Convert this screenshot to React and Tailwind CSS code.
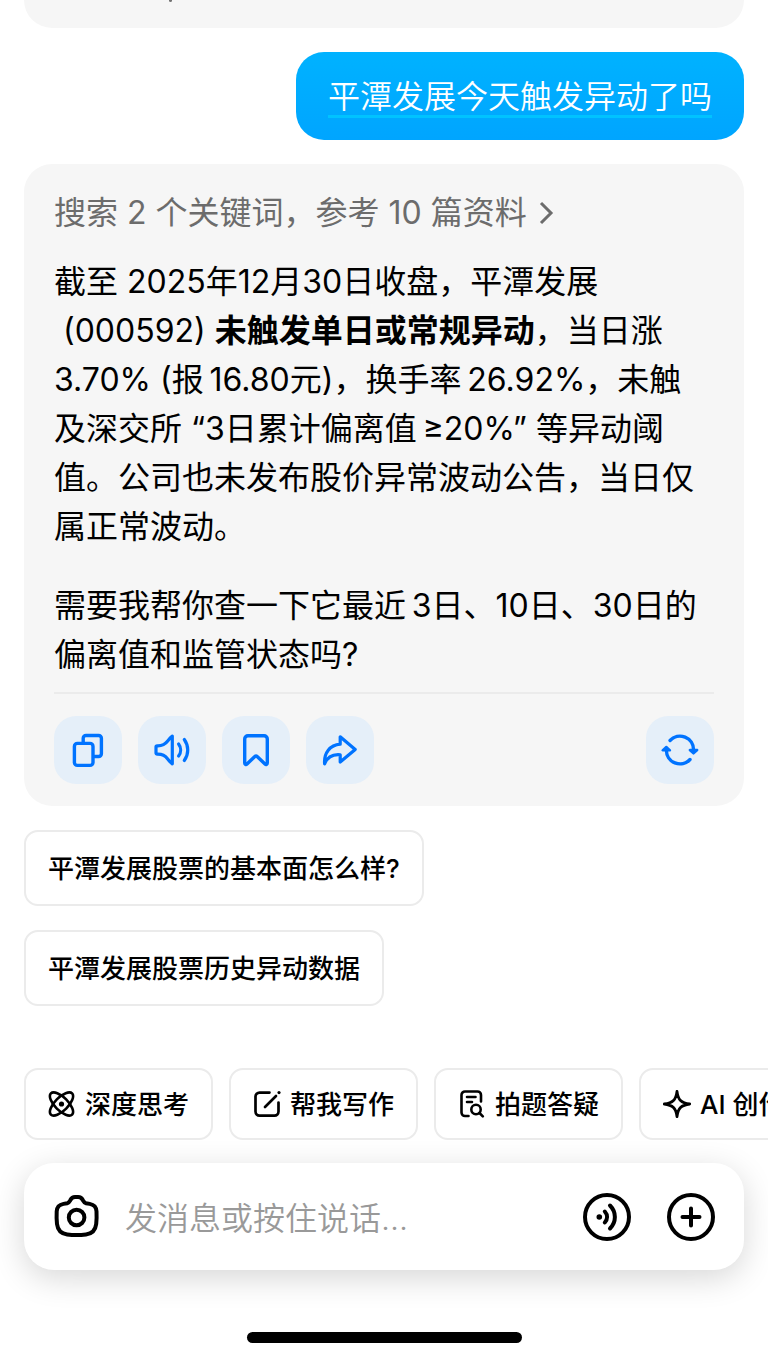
import React, { useState } from 'react';

const CopyIcon = () => (
    <svg viewBox="0 0 40 40" className="size-10" fill="none" stroke="currentColor" strokeWidth="3.4" strokeLinecap="round" strokeLinejoin="round">
        <rect x="6.4" y="13.4" width="18.6" height="22" rx="3" />
        <path d="M15.2 12.5V8.3a2.8 2.8 0 0 1 2.8-2.8h12.6a2.8 2.8 0 0 1 2.8 2.8v15.4a2.8 2.8 0 0 1-2.8 2.8h-4" />
    </svg>
);

const SpeakerIcon = () => (
    <svg viewBox="0 0 40 40" className="size-10" fill="none" stroke="currentColor" strokeWidth="3.2" strokeLinecap="round" strokeLinejoin="round">
        <path d="M5.2 15.8c4.500.2 8-1.500 10.500-4.800 1.500-2 2.900-3.700 4.600-4.800v27.600c-1.700-1.100-3.100-2.800-4.600-4.800-2.500-3.300-6-5-10.500-4.800-.7 0-1.200-.5-1.200-1.200v-6c0-.7.5-1.200 1.200-1.200Z" />
        <path d="M26.600 14c2.700 3.600 2.700 8.400 0 12M32.300 9.500c4.600 6.400 4.600 14.600 0 21" />
    </svg>
);

const BookmarkIcon = () => (
    <svg viewBox="0 0 40 40" className="size-10" fill="none" stroke="currentColor" strokeWidth="3.4" strokeLinecap="round" strokeLinejoin="round">
        <path d="M8.700 9a3.200 3.200 0 0 1 3.200-3.200h16.200a3.200 3.200 0 0 1 3.200 3.200v24c0 1.300-1.300 1.900-2.300 1l-7.600-7.300a2 2 0 0 0-2.800 0L11 34c-1 .9-2.300.3-2.300-1Z" />
    </svg>
);

const ShareIcon = () => (
    <svg viewBox="0 0 40 40" className="size-10" fill="none" stroke="currentColor" strokeWidth="3.2" strokeLinecap="round" strokeLinejoin="round">
        <path d="M20.200 6.800 35.200 19.400 20.200 32v-7.200c-7.500-.7-12.800 2.300-15.600 9-.8-10.700 5.300-18.800 15.600-19.600Z" />
    </svg>
);

const RefreshIcon = () => (
    <svg viewBox="0 0 40 40" className="size-10" fill="none" stroke="currentColor" strokeWidth="3.4" strokeLinecap="round" strokeLinejoin="round">
        <path d="M10 10.500a13.600 13.600 0 0 1 23.600 9.500" />
        <path d="M30 29.500a13.600 13.600 0 0 1-23.600-9.500" />
        <path d="M29.800 20h7.400l-3.700 3.400Z" fill="currentColor" strokeWidth="2.400" />
        <path d="M2.600 20.300h7.400l-3.700-3.400Z" fill="currentColor" strokeWidth="2.400" />
    </svg>
);

const AtomIcon = () => (
    <svg viewBox="0 0 28 28" className="size-7" fill="none" stroke="currentColor" strokeWidth="2.600">
        <ellipse cx="13.500" cy="14" rx="15" ry="6.600" transform="rotate(45 13.500 14)" />
        <ellipse cx="13.500" cy="14" rx="15" ry="6.600" transform="rotate(-45 13.500 14)" />
        <circle cx="13.500" cy="14" r="2.600" fill="currentColor" stroke="none" />
    </svg>
);

const WriteIcon = () => (
    <svg viewBox="0 0 28 28" className="size-7" fill="none" stroke="currentColor" strokeWidth="2.700" strokeLinecap="round" strokeLinejoin="round">
        <path d="M16.500 2.600H6.500a4 4 0 0 0-4 4v15a4 4 0 0 0 4 4h15a4 4 0 0 0 4-4v-9" />
        <path d="M12 17 23 6" />
        <circle cx="26" cy="2.600" r="1.600" fill="currentColor" stroke="none" />
    </svg>
);

const SolveIcon = () => (
    <svg viewBox="0 0 28 28" className="size-7" fill="none" stroke="currentColor" strokeWidth="2.600" strokeLinecap="round" strokeLinejoin="round">
        <path d="M10.500 26H7a3.500 3.500 0 0 1-3.500-3.500v-17.500a3.500 3.500 0 0 1 3.500-3.500h12.500a3.500 3.500 0 0 1 3.500 3.500v6.500" />
        <path d="M9 7h8.500M9 12h5" />
        <circle cx="18" cy="19.500" r="4.700" />
        <path d="m21.500 23 3.300 3.300" />
    </svg>
);

const SparkIcon = () => (
    <svg viewBox="0 0 28 28" className="size-7" fill="none" stroke="currentColor" strokeWidth="2.800" strokeLinejoin="round">
        <path d="M14 1.300c1 8.500 4.200 11.700 12.700 12.700-8.500 1-11.700 4.200-12.700 12.700-1-8.500-4.200-11.700-12.700-12.700 8.500-1 11.700-4.200 12.700-12.700Z" />
    </svg>
);

const CameraIcon = () => (
    <svg viewBox="0 0 48 48" className="size-12" fill="none" stroke="currentColor" strokeWidth="4" strokeLinejoin="round">
        <path d="M14.200 10.200c1.800-.4 2.300-1.600 3.200-3.200 1-1.900 2.400-2.900 4.600-2.900h3.200c2.200 0 3.600 1 4.600 2.900.9 1.600 1.400 2.800 3.200 3.200l3.700.7c4.300.8 6.600 3.200 6.800 7.500.2 4.200.2 8.300-.3 12.500-.8 6.600-3.800 9.700-10.200 10.500-6.200.8-12.700.8-18.800 0-6.400-.8-9.400-3.900-10.200-10.500-.5-4.200-.5-8.300-.3-12.500.2-4.300 2.500-6.700 6.800-7.500Z" />
        <circle cx="23.600" cy="24.500" r="7.800" />
    </svg>
);

const VoiceIcon = () => (
    <svg viewBox="0 0 48 48" className="size-12" fill="none" stroke="currentColor" strokeWidth="4" strokeLinecap="round">
        <circle cx="24" cy="24" r="22" />
        <circle cx="16.300" cy="24" r="2.800" fill="currentColor" stroke="none" />
        <path d="M21.800 18.500c3 3.400 3 7.600 0 11M27 12.500c6.500 6.500 6.500 16.500 0 23" />
    </svg>
);

const PlusIcon = () => (
    <svg viewBox="0 0 48 48" className="size-12" fill="none" stroke="currentColor" strokeWidth="4" strokeLinecap="round">
        <circle cx="24" cy="24" r="22" />
        <path d="M24 15.500v17M15.500 24h17" />
    </svg>
);

const actions = [
    { label: '复制', icon: CopyIcon },
    { label: '朗读', icon: SpeakerIcon },
    { label: '收藏', icon: BookmarkIcon },
    { label: '分享', icon: ShareIcon },
];

const suggestions = ['平潭发展股票的基本面怎么样?', '平潭发展股票历史异动数据'];

const tools = [
    { label: '深度思考', icon: AtomIcon },
    { label: '帮我写作', icon: WriteIcon },
    { label: '拍题答疑', icon: SolveIcon },
    { label: 'AI 创作', icon: SparkIcon },
];

function ActionButton({ label, icon: Icon }) {
    return (
        <button type="button" aria-label={label} className="flex size-[68px] items-center justify-center rounded-[22px] bg-[#e5eff9] text-[#0073ff]">
            <Icon />
        </button>
    );
}

export default function App() {
    const [message, setMessage] = useState('');

    return (
        <div className="overflow-hidden bg-white font-[Inter,'Noto_Sans_CJK_SC',sans-serif] text-[32px] text-black">
            <main className="flex flex-col px-6">
                {/* End of the previous answer */}
                <div className="h-7 rounded-b-[28px] bg-[#f6f6f6] pl-[145px]">
                    <div className="h-0.5 w-[3px] rounded-b-full bg-neutral-500" />
                </div>

                <div className="mt-6 flex h-[88px] items-end self-end rounded-[28px] bg-linear-to-b from-[#00b2ff] to-[#00a5ff] px-8 pb-[22px]">
                    <p className="border-b-3 border-[#00c3ff] leading-[37px] font-[350] text-white">平潭发展今天触发异动了吗</p>
                </div>

                <section className="mt-6 rounded-[28px] bg-[#f6f6f6] px-[30px] pt-[25px] pb-[22px]">
                    <button type="button" className="flex items-center gap-3 leading-[48px] text-[#6c6c6c]">
                        搜索 2 个关键词，参考 10 篇资料
                        <svg viewBox="0 0 16 24" className="h-6 w-4" fill="none" stroke="currentColor" strokeWidth="3">
                            <path d="m2 2 10 10L2 22" />
                        </svg>
                    </button>

                    <div className="mt-5 space-y-[30px] leading-[49px] whitespace-nowrap">
                        <p>
                            截至 2025年12月30日收盘，平潭发展<br />
                            &nbsp;(000592) <strong className="font-bold">未触发单日或常规异动</strong>，当日涨<br />
                            3.70% (报&thinsp;16.80元)，换手率&thinsp;26.92%，未触<br />
                            及深交所 “3日累计偏离值&thinsp;≥20%” 等异动阈<br />
                            值。公司也未发布股价异常波动公告，当日仅<br />
                            属正常波动。
                        </p>
                        <p>
                            需要我帮你查一下它最近&thinsp;3日、10日、30日的<br />
                            偏离值和监管状态吗?
                        </p>
                    </div>

                    <div className="mt-[13px] flex gap-4 border-t-2 border-[#ebebeb] pt-[22px]">
                        {actions.map((action) => (
                            <ActionButton key={action.label} {...action} />
                        ))}
                        <div className="ml-auto">
                            <ActionButton label="重新生成" icon={RefreshIcon} />
                        </div>
                    </div>
                </section>

                <div className="mt-6 flex flex-col items-start gap-6 text-[26px] font-medium">
                    {suggestions.map((text) => (
                        <button key={text} type="button" className="h-[76px] rounded-[14px] border-2 border-[#ebebeb] px-[22px]">
                            {text}
                        </button>
                    ))}
                </div>
            </main>

            <footer className="mt-[62px]">
                <div className="flex gap-4 overflow-hidden pl-6 text-[26px] font-medium">
                    {tools.map(({ label, icon: Icon }) => (
                        <button key={label} type="button" className="flex h-[72px] shrink-0 items-center gap-[9px] rounded-[14px] border-2 border-[#ebebeb] px-[22px] whitespace-nowrap">
                            <Icon />
                            {label}
                        </button>
                    ))}
                </div>

                <form
                    onSubmit={(e) => e.preventDefault()}
                    className="mx-6 mt-[23px] flex h-[107px] items-center rounded-[30px] bg-white px-[29px] shadow-[0_8px_32px_rgba(0,0,0,0.16)]"
                >
                    <button type="button" aria-label="拍照">
                        <CameraIcon />
                    </button>
                    <input
                        type="text"
                        aria-label="消息"
                        value={message}
                        onChange={(e) => setMessage(e.target.value)}
                        placeholder="发消息或按住说话..."
                        className="mx-6 min-w-0 flex-1 pt-1 font-[350] outline-none placeholder:text-[#999999]"
                    />
                    <div className="flex gap-9">
                        <button type="button" aria-label="语音通话">
                            <VoiceIcon />
                        </button>
                        <button type="button" aria-label="更多">
                            <PlusIcon />
                        </button>
                    </div>
                </form>

                <div className="mx-auto mt-[62px] mb-[15px] h-[11px] w-[275px] rounded-full bg-black" />
            </footer>
        </div>
    );
}
